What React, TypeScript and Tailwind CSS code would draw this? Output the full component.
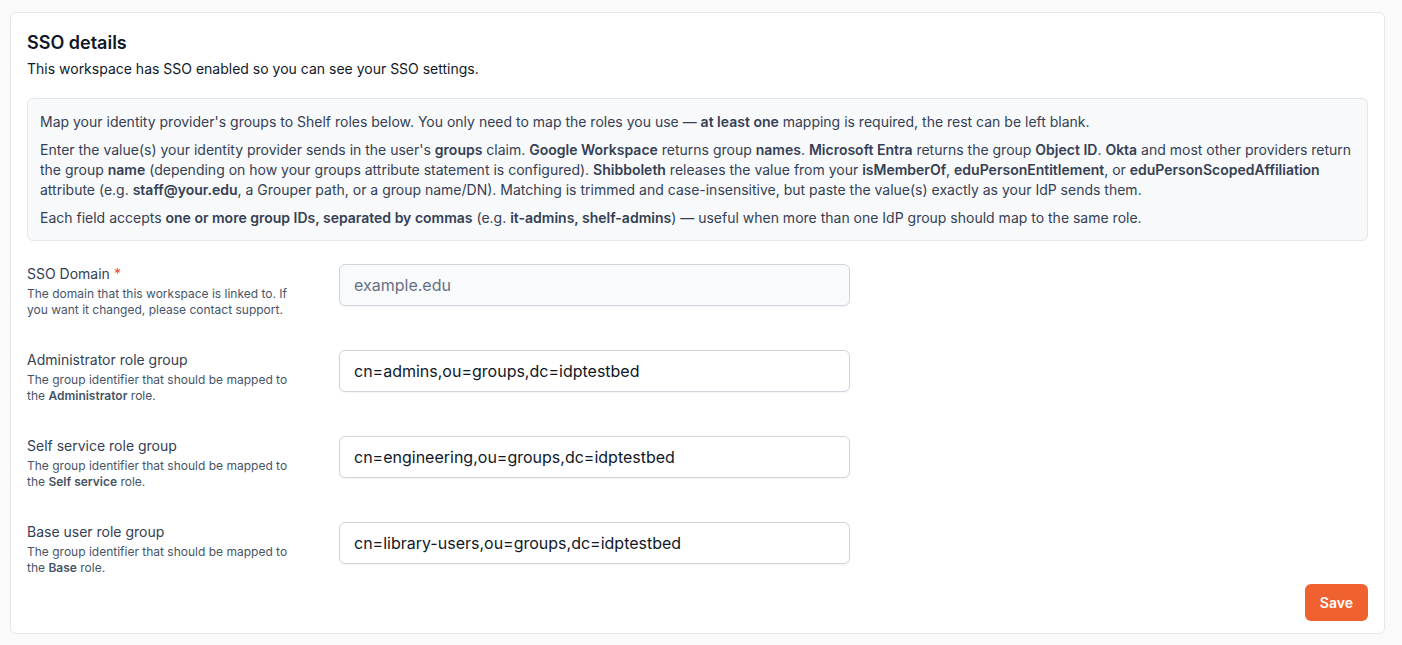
import React from "react";

const rows = [
  {
    label: "SSO Domain",
    required: true,
    help: <>The domain that this workspace is linked to. If you want it changed, please contact support.</>,
    value: "example.edu",
    disabled: true,
  },
  {
    label: "Administrator role group",
    help: <>The group identifier that should be mapped to the <b className="font-semibold">Administrator</b> role.</>,
    value: "cn=admins,ou=groups,dc=idptestbed",
  },
  {
    label: "Self service role group",
    help: <>The group identifier that should be mapped to the <b className="font-semibold">Self service</b> role.</>,
    value: "cn=engineering,ou=groups,dc=idptestbed",
  },
  {
    label: "Base user role group",
    help: <>The group identifier that should be mapped to the <b className="font-semibold">Base</b> role.</>,
    value: "cn=library-users,ou=groups,dc=idptestbed",
  },
];

export default function App() {
  return (
    <div className="min-h-[645px] bg-[#fafafa] pl-[10px] pr-[17px] pt-3 font-['Inter',sans-serif] text-[#101828]">
      <div className="rounded-md border border-[#e4e7ec] bg-white px-4 pt-4 pb-3">
        <h2 className="text-lg font-semibold leading-7">SSO details</h2>
        <p className="mt-0.5 text-sm leading-5 text-[#101828]">
          This workspace has SSO enabled so you can see your SSO settings.
        </p>

        <div className="mt-[19px] space-y-2 rounded-md border border-[#e4e7ec] bg-[#f8f9fb] px-3 pt-[13px] pb-3 text-sm leading-5 text-[#344054]">
          <p>
            Map your identity provider's groups to Shelf roles below. You only need to map the roles you use —{" "}
            <b className="font-semibold">at least one</b> mapping is required, the rest can be left blank.
          </p>
          <p>
            Enter the value(s) your identity provider sends in the user's <b className="font-semibold">groups</b> claim.{" "}
            <b className="font-semibold">Google Workspace</b> returns group <b className="font-semibold">names</b>.{" "}
            <b className="font-semibold">Microsoft Entra</b> returns the group <b className="font-semibold">Object ID</b>.{" "}
            <b className="font-semibold">Okta</b> and most other providers return the group{" "}
            <b className="font-semibold">name</b> (depending on how your groups attribute statement is configured).{" "}
            <b className="font-semibold">Shibboleth</b> releases the value from your{" "}
            <b className="font-semibold">isMemberOf</b>, <b className="font-semibold">eduPersonEntitlement</b>, or{" "}
            <b className="font-semibold">eduPersonScopedAffiliation</b> attribute (e.g.{" "}
            <b className="font-semibold">staff@your.edu</b>, a Grouper path, or a group name/DN). Matching is trimmed and
            case-insensitive, but paste the value(s) exactly as your IdP sends them.
          </p>
          <p>
            Each field accepts <b className="font-semibold">one or more group IDs, separated by commas</b> (e.g.{" "}
            <b className="font-semibold">it-admins, shelf-admins</b>) — useful when more than one IdP group should map to
            the same role.
          </p>
        </div>

        <div className="mt-[23px] flex flex-col gap-8">
          {rows.map((r) => (
            <div key={r.label} className="flex items-start gap-8">
              <div className="w-[280px] shrink-0">
                <div className="text-sm leading-5 text-[#344054]">
                  {r.label}
                  {r.required && <span className="ml-1 text-[#f04438]">*</span>}
                </div>
                <p className="mt-0.5 text-xs leading-4 text-[#475467]">{r.help}</p>
              </div>
              <div
                className={
                  r.disabled
                    ? "flex h-[42px] w-[511px] items-center rounded-md border border-[#d0d5dd] bg-[#f9fafb] px-3.5 text-base shadow-[0_1px_2px_rgba(16,24,40,0.05)]"
                    : "flex h-[42px] w-[511px] items-center rounded-md border border-[#d0d5dd] bg-white px-3.5 text-base shadow-[0_1px_2px_rgba(16,24,40,0.05)]"
                }
              >
                {r.disabled ? (
                  <span className="text-[#667085]">{r.value}</span>
                ) : (
                  <span className="text-[#101828]">{r.value}</span>
                )}
              </div>
            </div>
          ))}
        </div>

        <div className="mt-[8px] flex justify-end">
          <button className="h-[37px] rounded-md bg-[#ef622f] px-[15px] text-sm font-semibold text-white">
            Save
          </button>
        </div>
      </div>
    </div>
  );
}
